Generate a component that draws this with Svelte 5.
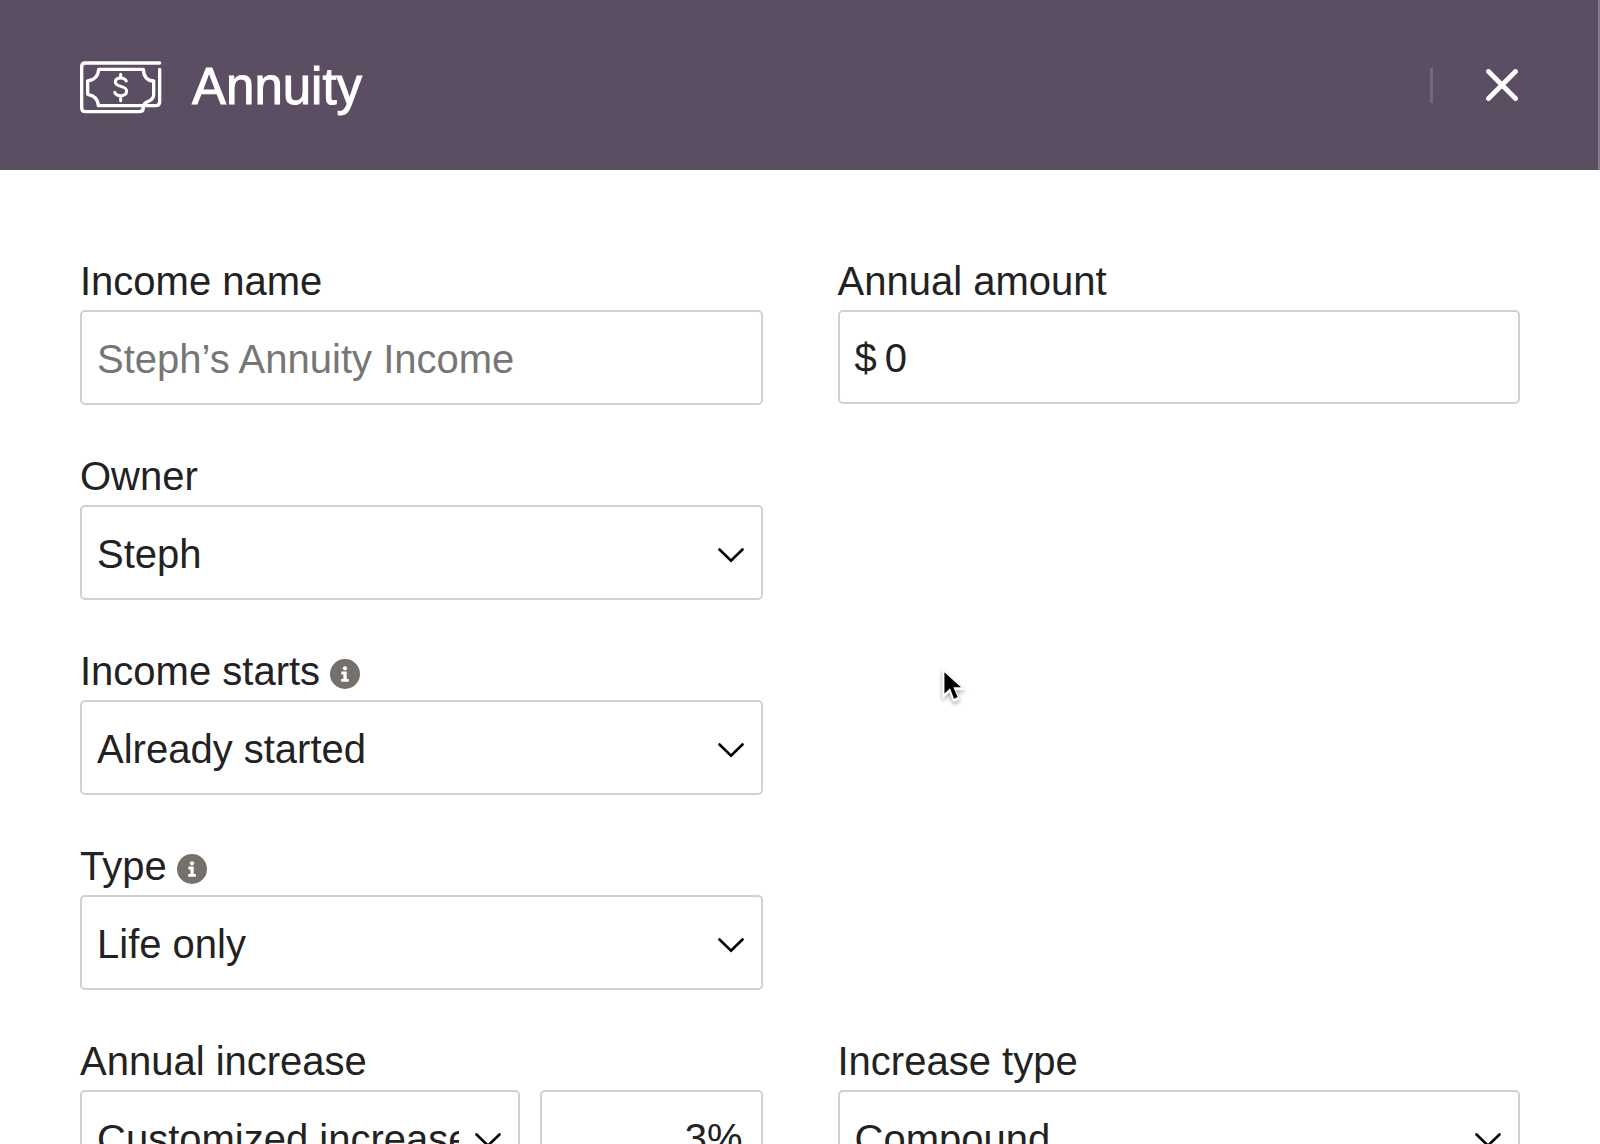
<script lang="ts">
  let name = $state('');
  let amount = $state('0');
  let owner = $state('Steph');
  let starts = $state('Already started');
  let payoutType = $state('Life only');
  let increase = $state('Customized increase');
  let rate = $state('3%');
  let increaseType = $state('Compound');
  let open = $state(true);

  const owners = ['Steph', 'Joint'];
  const startOptions = ['Already started', 'At retirement', 'On a date'];
  const payoutTypes = ['Life only', 'Joint and survivor', 'Fixed period'];
  const increases = ['Customized increase', 'No increase', 'Inflation'];
  const increaseTypes = ['Compound', 'Simple'];
</script>

{#snippet chevron()}
  <svg class="chevron" viewBox="0 0 26 15" fill="none" aria-hidden="true">
    <path d="M1.5 1.5 13 12.6 24.5 1.5" stroke="#000" stroke-width="2.6" stroke-linecap="round" />
  </svg>
{/snippet}

{#snippet info(label: string)}
  <button class="info" type="button" aria-label={label}>
    <svg viewBox="0 0 30 30" aria-hidden="true">
      <circle cx="15" cy="15" r="15" fill="#76706b" />
      <circle cx="15" cy="9.3" r="2.1" fill="#fff" />
      <path d="M11.4 12.6h5.3v7.3h2.1v2.8h-7.6v-2.8h2.2v-4.5h-2z" fill="#fff" />
    </svg>
  </button>
{/snippet}

{#if open}
  <div class="modal" role="dialog" aria-labelledby="modal-title">
    <header class="header">
      <div class="brand">
        <svg class="money" viewBox="60 60 246 162" fill="none" stroke="#fff" stroke-width="10" stroke-linecap="round" stroke-linejoin="round" aria-hidden="true">
          <path d="M299 69H76q-11 0-11 11v124q0 11 11 11h162q11 0 12-11 0-14 11-18 21-9 20-23v-40c-17-1-30-11-31-35H116c-1 20-14 33-33 35v40c18 3 31 14 32 34h172q12 0 12-12V88" />
          <path d="M199 123c-3-6-9-9-17-9-10 0-16 5-16 12 0 17 34 9 34 27 0 9-7 14-18 14-8 0-15-3-18-10M182 103v10M182 168v14" stroke-width="9" />
        </svg>
        <h1 id="modal-title">Annuity</h1>
      </div>
      <div class="actions">
        <span class="divider"></span>
        <button class="close" type="button" aria-label="Close" onclick={() => (open = false)}>
          <svg viewBox="0 0 32 32" fill="none" aria-hidden="true">
            <path d="M2.5 2.5l27 27M29.5 2.5l-27 27" stroke="#fff" stroke-width="4.8" stroke-linecap="round" />
          </svg>
        </button>
      </div>
    </header>

    <form class="form">
      <div class="field">
        <div class="label-row"><label for="name">Income name</label></div>
        <input id="name" class="control low" type="text" placeholder="Steph’s Annuity Income" bind:value={name} />
      </div>

      <div class="field">
        <div class="label-row"><label for="amount">Annual amount</label></div>
        <div class="control money-input">
          <span>$</span>
          <input id="amount" type="text" inputmode="numeric" bind:value={amount} />
        </div>
      </div>

      <div class="field first">
        <div class="label-row"><label for="owner">Owner</label></div>
        <div class="select">
          <select id="owner" class="control low" bind:value={owner}>
            {#each owners as option}<option>{option}</option>{/each}
          </select>
          {@render chevron()}
        </div>
      </div>

      <div class="field first">
        <div class="label-row">
          <label for="starts">Income starts</label>
          {@render info('About income starts')}
        </div>
        <div class="select">
          <select id="starts" class="control low" bind:value={starts}>
            {#each startOptions as option}<option>{option}</option>{/each}
          </select>
          {@render chevron()}
        </div>
      </div>

      <div class="field first">
        <div class="label-row">
          <label for="type">Type</label>
          {@render info('About type')}
        </div>
        <div class="select">
          <select id="type" class="control low" bind:value={payoutType}>
            {#each payoutTypes as option}<option>{option}</option>{/each}
          </select>
          {@render chevron()}
        </div>
      </div>

      <div class="field first">
        <div class="label-row"><label for="increase">Annual increase</label></div>
        <div class="split">
          <div class="select">
            <select id="increase" class="control low" bind:value={increase}>
              {#each increases as option}<option>{option}</option>{/each}
            </select>
            {@render chevron()}
          </div>
          <input class="control rate" type="text" aria-label="Annual increase rate" bind:value={rate} />
        </div>
      </div>

      <div class="field">
        <div class="label-row"><label for="increase-type">Increase type</label></div>
        <div class="select">
          <select id="increase-type" class="control low" bind:value={increaseType}>
            {#each increaseTypes as option}<option>{option}</option>{/each}
          </select>
          {@render chevron()}
        </div>
      </div>
    </form>
  </div>
{/if}

<svg class="pointer" viewBox="0 0 84 112" aria-hidden="true">
  <path d="M4 4v92l21-19 12 29 20-8-12-28h28z" fill="#fff" />
  <path d="M10 16v64l17-16 12 32 11-5-13-30h23z" fill="#000" />
</svg>

<style>
  :global(body) {
    background: #fff;
  }

  .modal {
    height: 100vh;
    overflow: hidden;
    font-family: 'Liberation Sans', Arial, sans-serif;
    font-size: 40px;
    color: #222;
  }

  .header {
    box-sizing: border-box;
    height: 170px;
    padding: 0 80px;
    display: flex;
    align-items: center;
    justify-content: space-between;
    background: #5b4d62;
    border-right: 2px solid #85788a;
  }

  .brand {
    display: flex;
    align-items: center;
    gap: 30px;
    padding-top: 4px;
  }

  .money {
    width: 82px;
    height: 54px;
  }

  h1 {
    margin: 0;
    font-size: 51px;
    line-height: 56px;
    font-weight: 400;
    color: #fff;
    -webkit-text-stroke: 1px #fff;
  }

  .actions {
    display: flex;
    align-items: center;
    gap: 53px;
  }

  .divider {
    width: 3px;
    height: 35px;
    background: #75687b;
  }

  button {
    padding: 0;
    border: 0;
    background: none;
    cursor: pointer;
  }

  button svg {
    display: block;
    width: 100%;
    height: 100%;
  }

  .close {
    width: 32px;
    height: 32px;
  }

  .form {
    display: grid;
    grid-template-columns: repeat(2, minmax(0, 1fr));
    gap: 49px 75px;
    padding: 89px 80px;
  }

  .first {
    grid-column: 1;
  }

  .label-row {
    display: flex;
    align-items: center;
    gap: 10px;
    margin-bottom: 7px;
    line-height: 44px;
  }

  .info {
    width: 30px;
    height: 30px;
    margin-top: 6px;
  }

  .control {
    box-sizing: border-box;
    display: block;
    width: 100%;
    height: 94px;
    margin: 0;
    padding: 2px 15px 0;
    border: 2px solid #d6cfca;
    border-radius: 5px;
    background: #fff;
    font: inherit;
    color: inherit;
    outline: none;
  }

  .control.low {
    height: 95px;
    padding-top: 3px;
  }

  .control::placeholder {
    color: #767676;
    opacity: 1;
  }

  .money-input {
    display: flex;
    align-items: center;
    gap: 8px;
  }

  .money-input input {
    flex: 1;
    min-width: 0;
    padding: 0;
    border: 0;
    font: inherit;
    color: inherit;
    outline: none;
  }

  .select {
    position: relative;
  }

  select.control {
    appearance: none;
    padding-right: 59px;
  }

  .chevron {
    position: absolute;
    top: 43px;
    right: 19px;
    width: 26px;
    height: 15px;
    pointer-events: none;
  }

  .split {
    display: grid;
    grid-template-columns: minmax(0, 1fr) 223px;
    gap: 20px;
  }

  .rate {
    padding-right: 18px;
    text-align: right;
  }

  .pointer {
    position: fixed;
    left: 941px;
    top: 667px;
    width: 28px;
    height: 37px;
    filter: drop-shadow(0 2px 2px rgba(0, 0, 0, 0.35));
    pointer-events: none;
  }
</style>
